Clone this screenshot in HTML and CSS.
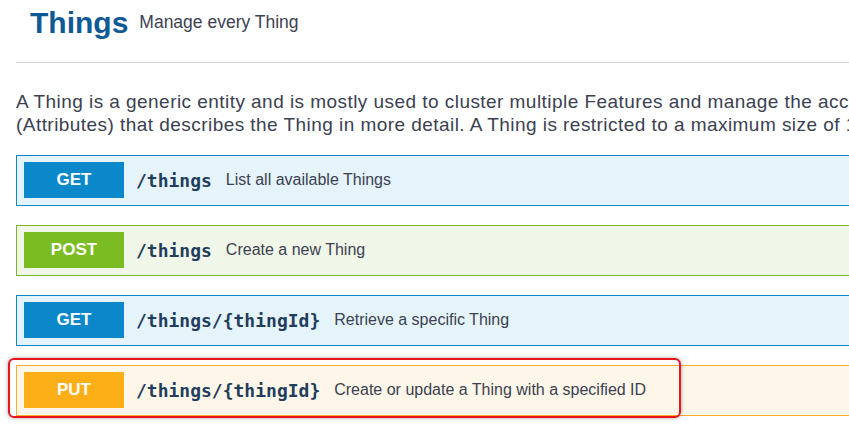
FILE: index.html
```html
<!DOCTYPE html>
<html lang="en">
<head>
<meta charset="utf-8">
<title>Things</title>
<link rel="stylesheet" href="styles.css">
</head>
<body>
<div class="page">
  <header class="tag-header">
    <h4 class="tag-title">Things</h4>
    <small class="tag-sub">Manage every Thing</small>
  </header>
  <div class="tag-body">
    <p class="tag-desc">A Thing is a generic entity and is mostly used to cluster multiple Features and manage the access to the Thing and its Features<br>(Attributes) that describes the Thing in more detail. A Thing is restricted to a maximum size of 1 MB.</p>

    <div class="opblock get">
      <span class="method">GET</span>
      <span class="path">/things</span>
      <span class="summary">List all available Things</span>
    </div>
    <div class="opblock post">
      <span class="method">POST</span>
      <span class="path">/things</span>
      <span class="summary">Create a new Thing</span>
    </div>
    <div class="opblock get">
      <span class="method">GET</span>
      <span class="path">/things/{thingId}</span>
      <span class="summary">Retrieve a specific Thing</span>
    </div>
    <div class="opblock put highlighted">
      <span class="method">PUT</span>
      <span class="path">/things/{thingId}</span>
      <span class="summary">Create or update a Thing with a specified ID</span>
      <span class="highlight-ring"></span>
    </div>
  </div>
</div>
</body>
</html>
```

FILE: styles.css
```css
html, body {
  margin: 0;
  padding: 0;
  background: #ffffff;
  overflow: hidden;
}

body {
  font-family: "Liberation Sans", Arial, sans-serif;
  color: #3b4151;
}

.page {
  width: 1100px;
}

.tag-header {
  display: flex;
  align-items: flex-start;
  padding: 5px 0 0 30px;
}

.tag-title {
  margin: 0;
  font-size: 30px;
  line-height: 36px;
  font-weight: bold;
  color: #0f5a94;
}

.tag-sub {
  margin: 6px 0 0 11px;
  font-size: 17.5px;
  line-height: 22px;
  color: #3b4151;
}

.tag-body {
  margin: 21px 0 0 16px;
  border-top: 1px solid #d2d2d6;
}

.tag-desc {
  margin: 27px 0 19px 0;
  font-size: 19px;
  letter-spacing: 0.45px;
  line-height: 23px;
  white-space: nowrap;
  color: #3b4151;
}

.opblock {
  position: relative;
  display: flex;
  align-items: center;
  padding: 6px 7px 7px 7px;
  margin-bottom: 19px;
  border: 1px solid;
}

.method {
  width: 100px;
  height: 36px;
  line-height: 36px;
  text-align: center;
  font-size: 17px;
  font-weight: bold;
  color: #ffffff;
}

.path {
  margin-left: 12px;
  font-family: "DejaVu Sans Mono", "Liberation Mono", monospace;
  font-size: 18px;
  font-weight: bold;
  color: #1f3d5c;
}

.summary {
  margin-left: 14px;
  font-size: 16px;
  color: #3b4151;
}

.get {
  background: #e5f3fa;
  border-color: #0a88c9;
}
.get .method {
  background: #0a88c9;
}

.post {
  background: #f0f6e8;
  border-color: #7ab829;
}
.post .method {
  background: #7abc22;
}

.put {
  background: #fef6e8;
  border-color: #f8ad2c;
}
.put .method {
  background: #fcae17;
}

.highlight-ring {
  position: absolute;
  left: -9px;
  top: -8px;
  width: 669px;
  height: 56px;
  border: 2px solid #e8141c;
  border-radius: 6px;
  box-shadow: 0 0 4px rgba(0, 0, 0, 0.35);
  pointer-events: none;
}
```
